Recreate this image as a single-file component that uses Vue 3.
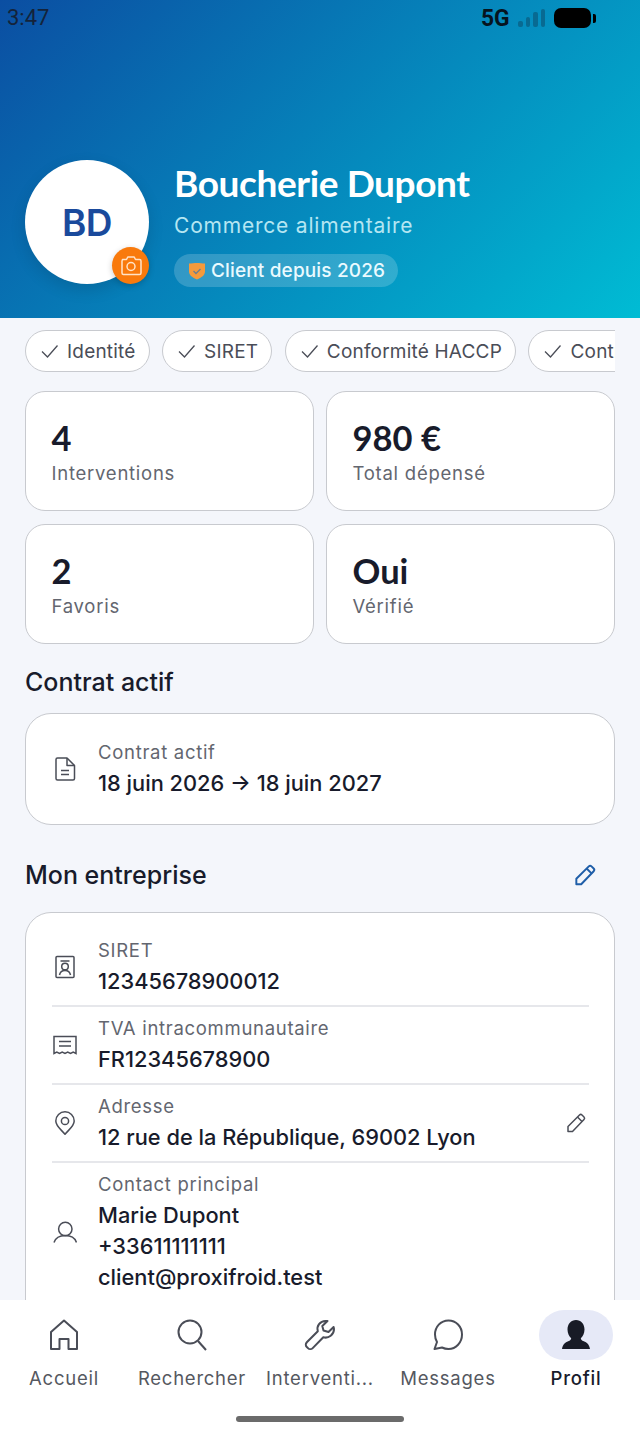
<script setup>
const chips = ['Identité', 'SIRET', 'Conformité HACCP', 'Contrat actif']
const stats = [
  { value: '4', label: 'Interventions' },
  { value: '980 €', label: 'Total dépensé' },
  { value: '2', label: 'Favoris' },
  { value: 'Oui', label: 'Vérifié' },
]
</script>

<template>
  <div class="page">
    <header class="hero">
      <div class="status">
        <span class="time">3:47</span>
        <div class="status-right">
          <span class="net">5G</span>
          <span class="bars"><i class="b1"></i><i class="b2"></i><i class="b3"></i><i class="b4"></i></span>
          <span class="batt"></span><span class="batt-tip"></span>
        </div>
      </div>
      <div class="identity">
        <div class="avatar">
          BD
          <span class="cam">
            <svg viewBox="0 0 24 24" width="24" height="24" fill="none" stroke="#ffe3c7" stroke-width="1.5" stroke-linejoin="round">
              <path d="M3.500 5.500h4l1.300-2.500h6.400l1.300 2.500h4a1.500 1.500 0 0 1 1.500 1.500v12a1.500 1.500 0 0 1-1.500 1.500h-16a1.500 1.500 0 0 1-1.500-1.500V7a1.500 1.500 0 0 1 1.500-1.500z"/>
              <circle cx="12" cy="12.500" r="4"/>
            </svg>
          </span>
        </div>
        <div class="who">
          <h1>Boucherie Dupont</h1>
          <p class="sector">Commerce alimentaire</p>
          <span class="since">
            <svg viewBox="0 0 20 20" width="20" height="20">
              <path d="M2 2.500c2.500 0 5.500-.5 8-.5s5.500.5 8 .5v8c0 3.800-3.500 6-8 8-4.500-2-8-4.200-8-8z" fill="#f59a3c"/>
              <path d="M6.500 10l2.500 2.500 4.500-4.500" fill="none" stroke="#6f7f8f" stroke-width="1.400"/>
            </svg>
            Client depuis 2026
          </span>
        </div>
      </div>
    </header>

    <main class="content">
      <div class="chips">
        <span v-for="c in chips" :key="c" class="chip">
          <svg viewBox="0 0 22 22" width="22" height="22" fill="none" stroke="#4a4d57" stroke-width="1.300"><path d="M3 11.500l5.500 5.500 10-11.500"/></svg>
          {{ c }}
        </span>
      </div>

      <div class="stats">
        <div v-for="s in stats" :key="s.label" class="stat">
          <div class="value">{{ s.value }}</div>
          <div class="label">{{ s.label }}</div>
        </div>
      </div>

      <h2 class="title first">Contrat actif</h2>
      <section class="card contract">
        <svg class="ico" viewBox="0 0 24 24" width="24" height="24" fill="none" stroke="#4a4d57" stroke-width="1.500" stroke-linejoin="round">
          <path d="M4.500 1h9.500l7.500 7.500V21.500a1.500 1.500 0 0 1-1.500 1.500H4.500A1.500 1.500 0 0 1 3 21.500v-19A1.500 1.500 0 0 1 4.500 1z"/><path d="M14 1v7.500h7.500M8 13.500h8M8 17.500h8"/>
        </svg>
        <div>
          <div class="k">Contrat actif</div>
          <div class="v">18 juin 2026 → 18 juin 2027</div>
        </div>
      </section>

      <div class="title-row">
        <h2 class="title">Mon entreprise</h2>
        <svg viewBox="0 0 24 24" width="26" height="26" fill="none" stroke="#1f5ea8" stroke-width="1.800" stroke-linejoin="round">
          <path d="M4 20.500v-5L15.500 4a1.800 1.800 0 0 1 2.500 0l2 2a1.800 1.800 0 0 1 0 2.500L8.500 20.500z"/><path d="M13.500 6l4.500 4.500"/>
        </svg>
      </div>

      <section class="card list">
        <div class="row r1">
          <svg class="ico" viewBox="0 0 24 24" width="24" height="24" fill="none" stroke="#4a4d57" stroke-width="1.500">
            <rect x="3" y="1.500" width="18" height="21" rx="1"/><path d="M7.500 6h9"/><circle cx="12" cy="11.500" r="3.300"/><path d="M6.500 20c.5-2.800 2.800-4.500 5.500-4.500s5 1.700 5.500 4.500"/>
          </svg>
          <div class="text"><div class="k">SIRET</div><div class="v">12345678900012</div></div>
        </div>
        <div class="row">
          <svg class="ico" viewBox="0 0 24 24" width="24" height="24" fill="none" stroke="#4a4d57" stroke-width="1.500">
            <path d="M1 20.500V3.500h22v17l-2.800-1.400-2.700 1.400-2.800-1.400-2.700 1.400-2.800-1.400-2.700 1.400-2.700-1.400z"/><path d="M6 8.500h12M6 13h12"/>
          </svg>
          <div class="text"><div class="k">TVA intracommunautaire</div><div class="v">FR12345678900</div></div>
        </div>
        <div class="row">
          <svg class="ico" viewBox="0 0 24 24" width="24" height="24" fill="none" stroke="#4a4d57" stroke-width="1.500">
            <path d="M12 23.300C8 18.500 2.800 15 2.800 10a9.200 9.200 0 0 1 18.400 0c0 5-5.200 8.500-9.200 13.300z"/><circle cx="12" cy="10" r="3.600"/>
          </svg>
          <div class="text grow"><div class="k">Adresse</div><div class="v">12 rue de la République, 69002 Lyon</div></div>
          <svg class="edit" viewBox="0 0 24 24" width="24" height="24" fill="none" stroke="#4a4d57" stroke-width="1.500" stroke-linejoin="round">
            <path d="M4 20.500v-5L15.500 4a1.800 1.800 0 0 1 2.500 0l2 2a1.800 1.800 0 0 1 0 2.500L8.500 20.500z"/><path d="M13.500 6l4.500 4.500"/>
          </svg>
        </div>
        <div class="row last">
          <svg class="ico" viewBox="0 0 24 24" width="24" height="24" fill="none" stroke="#4a4d57" stroke-width="1.500">
            <circle cx="12.300" cy="9" r="6.700"/><path d="M1 22.500c1.500-4.500 6-7 11.300-7s9.700 2.500 11.200 7"/>
          </svg>
          <div class="text">
            <div class="k">Contact principal</div>
            <div class="v">Marie Dupont</div>
            <div class="v">+33611111111</div>
            <div class="v">client@proxifroid.test</div>
          </div>
        </div>
      </section>
    </main>

    <nav class="nav">
      <div class="tab">
        <span class="tab-ico"><svg viewBox="0 0 32 32" width="32" height="32" fill="none" stroke="#4a4d57" stroke-width="2" stroke-linejoin="round"><path d="M3 30V13L16 1.500 29 13v17h-8.500V20h-9v10z"/></svg></span>
        <span>Accueil</span>
      </div>
      <div class="tab">
        <span class="tab-ico"><svg viewBox="0 0 32 32" width="32" height="32" fill="none" stroke="#4a4d57" stroke-width="2"><circle cx="14" cy="13" r="11.500"/><path d="M22 22l8 9"/></svg></span>
        <span>Rechercher</span>
      </div>
      <div class="tab">
        <span class="tab-ico"><svg viewBox="0 0 32 32" width="32" height="32" fill="none" stroke="#4a4d57" stroke-width="2" stroke-linejoin="round"><path d="M21.500 2a8 8 0 0 0-7.700 10.300L2.800 23.300a3.400 3.400 0 0 0 0 4.800l1.100 1a3.400 3.400 0 0 0 4.800 0l10.600-10.800A8.500 8.500 0 0 0 30 10l-.400-2-5.100 5-5-1.500-1.200-4.500L23.500 2z"/></svg></span>
        <span>Interventi...</span>
      </div>
      <div class="tab">
        <span class="tab-ico"><svg viewBox="0 0 32 32" width="32" height="32" fill="none" stroke="#4a4d57" stroke-width="2" stroke-linejoin="round"><path d="M16.500 1.500C8.500 1.500 3 8 3 15.500c0 3 .8 5.500 2 7.500L2.500 30l7.500-1.500c1.800.9 4 1.500 6.500 1.500C24 30 30 23.500 30 15.500S24 1.500 16.500 1.500z"/></svg></span>
        <span>Messages</span>
      </div>
      <div class="tab active">
        <span class="tab-ico pill"><svg viewBox="0 0 32 32" width="32" height="32" fill="#181b26"><path d="M16 1c5 0 8.500 4 8.500 9.500 0 4-1.800 7-3.700 8.700.2 1.500 1 2.300 3 3.100 3 1.200 5.400 2.900 6.200 7.700H2c.8-4.800 3.200-6.500 6.200-7.700 2-.8 2.800-1.600 3-3.100C9.300 17.500 7.500 14.500 7.500 10.500 7.500 5 11 1 16 1z"/></svg></span>
        <span>Profil</span>
      </div>
      <span class="home"></span>
    </nav>
  </div>
</template>

<style>
html, body { margin: 0; padding: 0; }
</style>

<style scoped>
.page {
  width: 640px;
  height: 1437px;
  display: flex;
  flex-direction: column;
  overflow: hidden;
  background: #f4f6fb;
  font-family: Inter, "Liberation Sans", sans-serif;
  color: #181b2b;
  position: relative;
}
.hero {
  height: 318px;
  flex: none;
  box-sizing: border-box;
  background: linear-gradient(135deg, #0b4ea2 0%, #00bcd4 100%);
  display: flex;
  flex-direction: column;
  justify-content: space-between;
  padding-bottom: 34px;
}
.status {
  height: 36px;
  display: flex;
  justify-content: space-between;
}
.time {
  font-family: Roboto, sans-serif;
  font-size: 22px;
  line-height: 36px;
  margin-left: 7px;
  color: #14233a;
}
.status-right {
  display: flex;
  align-items: center;
  margin-right: 44px;
  height: 36px;
}
.net {
  font-family: Roboto, sans-serif;
  font-weight: 700;
  font-size: 24px;
  color: #06141f;
  width: 37px;
  transform: scaleX(.95);
  transform-origin: left;
}
.bars { display: flex; align-items: flex-end; gap: 3px; height: 18px; width: 36px; }
.bars i { width: 4.500px; background: #086a92; border-radius: 2px; display: block; }
.bars .b1 { height: 6px; }
.bars .b2 { height: 10px; }
.bars .b3 { height: 15px; }
.bars .b4 { height: 18px; }
.batt { width: 37px; height: 20px; background: #000; border-radius: 7px; }
.batt-tip { width: 3px; height: 9px; background: #000; border-radius: 0 2px 2px 0; margin-left: 2px; }
.identity {
  display: flex;
  align-items: flex-start;
  gap: 25px;
  padding-left: 25px;
  height: 124px;
}
.avatar {
  width: 124px;
  height: 124px;
  border-radius: 50%;
  background: #fff;
  color: #1a4a9c;
  font-size: 37px;
  font-weight: 600;
  letter-spacing: -.5px;
  display: flex;
  align-items: center;
  justify-content: center;
  position: relative;
  box-shadow: 0 6px 16px rgba(0, 0, 0, .12);
  flex: none;
}
.cam {
  position: absolute;
  right: 0;
  bottom: 0;
  width: 37px;
  height: 37px;
  border-radius: 50%;
  background: #f97a0c;
  display: flex;
  align-items: center;
  justify-content: center;
  box-shadow: 0 2px 6px rgba(0, 0, 0, .2);
}
.who { display: flex; flex-direction: column; align-items: flex-start; }
h1 {
  margin: 0;
  font-family: Lato, sans-serif;
  font-weight: 700;
  font-size: 37px;
  line-height: 46px;
  color: #fff;
  letter-spacing: -.4px;
}
.sector {
  margin: 7px 0 0;
  font-size: 21px;
  line-height: 26px;
  letter-spacing: .8px;
  color: #b5e6f2;
}
.since {
  margin-top: 15px;
  height: 33px;
  padding: 0 13px 0 13px;
  border-radius: 17px;
  background: rgba(255, 255, 255, .18);
  color: #eafaff;
  font-size: 19px;
  letter-spacing: .15px;
  font-weight: 500;
  display: flex;
  align-items: center;
  gap: 4px;
}
.content {
  flex: 1;
  min-height: 0;
  overflow: hidden;
  padding: 12px 25px 0;
}
.chips {
  display: flex;
  gap: 12.500px;
  overflow: hidden;
  height: 42px;
}
.chip {
  flex: none;
  box-sizing: border-box;
  height: 42px;
  border: 1.500px solid #c8cacf;
  border-radius: 21px;
  background: #fff;
  display: flex;
  align-items: center;
  gap: 6px;
  padding: 0 13px;
  font-size: 19px;
  letter-spacing: .2px;
  color: #4a4d57;
}
.stats {
  margin-top: 19px;
  display: grid;
  grid-template-columns: 1fr 1fr;
  gap: 13px 12px;
}
.stat {
  box-sizing: border-box;
  height: 120px;
  border: 1.500px solid #c8cacf;
  border-radius: 20px;
  background: #fff;
  padding: 25px 25.500px 0;
}
.value {
  font-size: 34.500px;
  line-height: 42px;
  margin-bottom: 1px;
  font-weight: 700;
  font-family: Lato, sans-serif;
  color: #181b2b;
}
.label {
  font-size: 18.500px;
  line-height: 26px;
  letter-spacing: .75px;
  color: #63666f;
}
.title {
  margin: 0;
  font-size: 25px;
  font-weight: 500;
  line-height: 32px;
  color: #181b2b;
}
.title.first { margin-top: 22px; }
.card {
  box-sizing: border-box;
  border: 1.500px solid #c8cacf;
  border-radius: 26px;
  background: #fff;
}
.contract {
  margin-top: 15px;
  height: 112px;
  display: flex;
  align-items: center;
  padding-left: 27px;
  gap: 21px;
}
.k {
  font-size: 18.500px;
  line-height: 26px;
  letter-spacing: .7px;
  margin-bottom: 3px;
  color: #63666f;
}
.v {
  font-size: 21.800px;
  line-height: 31px;
  font-weight: 500;
  color: #181b2b;
}
.title-row {
  margin-top: 34px;
  display: flex;
  align-items: center;
  justify-content: space-between;
  padding-right: 17px;
}
.list {
  margin-top: 21px;
  padding: 21px 25px 60px 26px;
}
.row {
  display: flex;
  align-items: center;
  gap: 21px;
  height: 78px;
  border-bottom: 2px solid #e6e7eb;
  box-sizing: border-box;
}
.row.r1 { height: 73px; padding-bottom: 6px; }
.row.last { border: 0; height: auto; padding-top: 8px; }
.ico { flex: none; }
.list .ico { margin-left: 1px; }
.grow { flex: 1; }
.edit { margin-right: 1px; }
.nav {
  position: absolute;
  left: 0;
  right: 0;
  bottom: 0;
  height: 137px;
  background: #fff;
  display: grid;
  grid-template-columns: repeat(5, 128px);
  padding-top: 10px;
  box-sizing: border-box;
}
.tab {
  display: flex;
  flex-direction: column;
  align-items: center;
  font-size: 18.500px;
  letter-spacing: .75px;
  color: #55585f;
  line-height: 26px;
  gap: 5px;
}
.tab-ico {
  width: 74px;
  height: 50px;
  display: flex;
  align-items: center;
  justify-content: center;
}
.pill { background: #e6e9f7; border-radius: 25px; }
.active { color: #181b2b; font-weight: 500; letter-spacing: .8px; }
.home {
  position: absolute;
  left: 236px;
  bottom: 15px;
  width: 168px;
  height: 6px;
  border-radius: 3px;
  background: #6b6b6b;
}
</style>
